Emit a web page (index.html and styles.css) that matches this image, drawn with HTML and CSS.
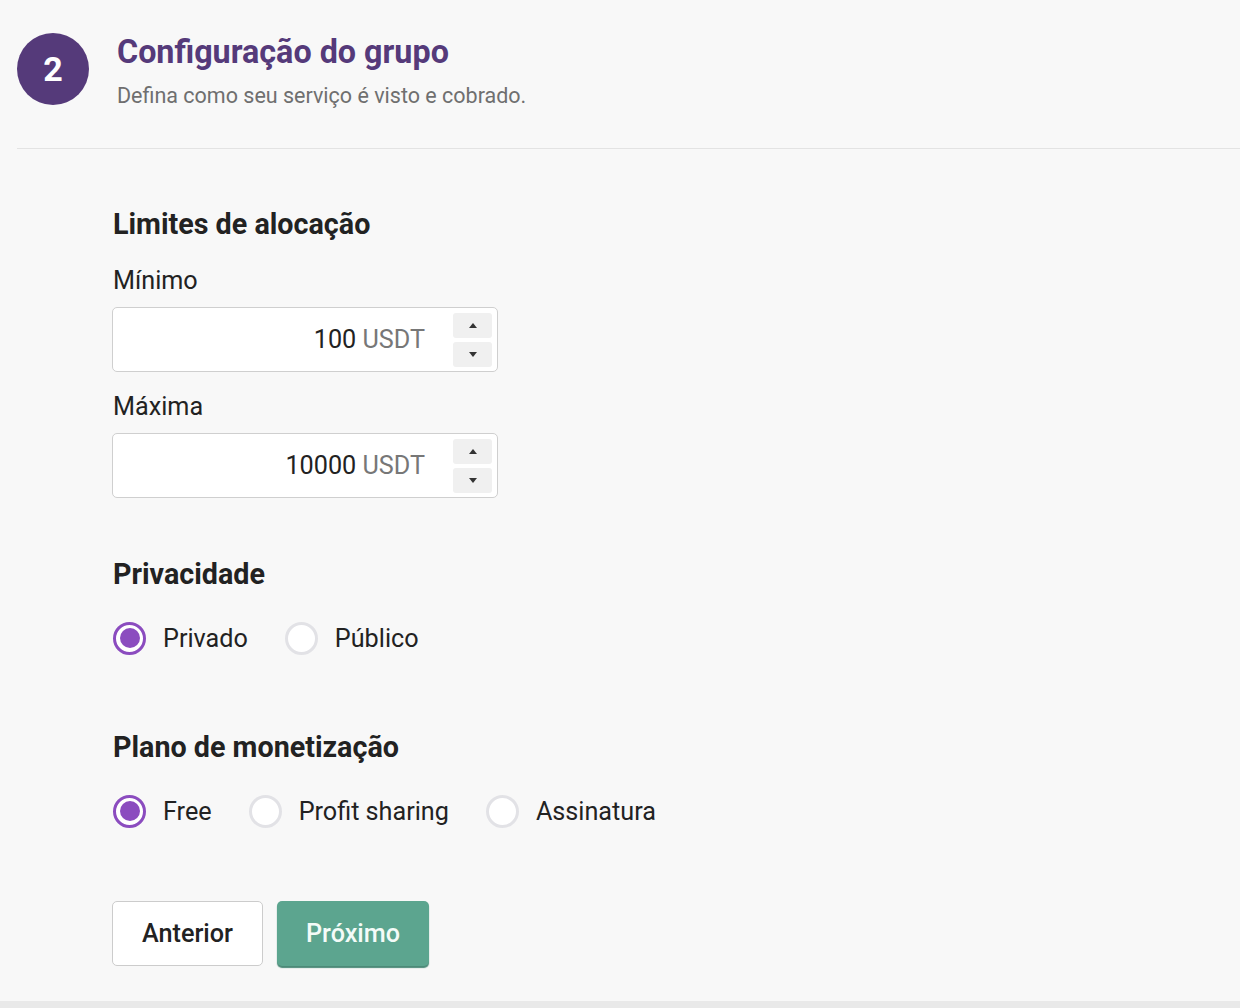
FILE: index.html
```html
<!DOCTYPE html>
<html lang="pt">
<head>
<meta charset="utf-8">
<title>Configuração do grupo</title>
<link rel="stylesheet" href="styles.css">
</head>
<body>
<div class="card">
  <header class="step-header">
    <div class="step-num">2</div>
    <div class="step-text">
      <h1 class="step-title">Configuração do grupo</h1>
      <p class="step-sub">Defina como seu serviço é visto e cobrado.</p>
    </div>
  </header>
  <div class="content">
    <section class="section alloc">
      <h2 class="section-title">Limites de alocação</h2>
      <label class="field-label first">Mínimo</label>
      <div class="num-input">
        <span class="num-value">100 <span class="unit">USDT</span></span>
        <div class="spin">
          <span class="spin-btn"><span class="tri up"></span></span>
          <span class="spin-btn"><span class="tri down"></span></span>
        </div>
      </div>
      <label class="field-label second">Máxima</label>
      <div class="num-input">
        <span class="num-value">10000 <span class="unit">USDT</span></span>
        <div class="spin">
          <span class="spin-btn"><span class="tri up"></span></span>
          <span class="spin-btn"><span class="tri down"></span></span>
        </div>
      </div>
    </section>
    <section class="section privacy">
      <h2 class="section-title">Privacidade</h2>
      <div class="radio-row">
        <span class="radio checked"><span class="dot"></span>Privado</span>
        <span class="radio"><span class="dot"></span>Público</span>
      </div>
    </section>
    <section class="section plan">
      <h2 class="section-title">Plano de monetização</h2>
      <div class="radio-row">
        <span class="radio checked"><span class="dot"></span>Free</span>
        <span class="radio"><span class="dot"></span>Profit sharing</span>
        <span class="radio"><span class="dot"></span>Assinatura</span>
      </div>
    </section>
    <div class="actions">
      <button class="btn btn-outline">Anterior</button>
      <button class="btn btn-primary">Próximo</button>
    </div>
  </div>
</div>
</body>
</html>
```
FILE: styles.css
```css
* { box-sizing: border-box; }
html, body {
  margin: 0;
  padding: 0;
  background: #e9e9e9;
  font-family: Roboto, "Liberation Sans", Arial, sans-serif;
  color: #222222;
}
.card {
  background: #f8f8f8;
  height: 1001px;
  box-shadow: 0 1px 4px rgba(0,0,0,0.18);
  overflow: hidden;
}
.step-header {
  display: flex;
  align-items: flex-start;
  margin-left: 17px;
  padding-top: 33px;
  height: 149px;
  border-bottom: 1px solid #e3e3e3;
}
.step-num {
  width: 72px;
  height: 72px;
  border-radius: 50%;
  background: #553a7a;
  color: #ffffff;
  font-size: 34px;
  font-weight: 700;
  display: flex;
  align-items: center;
  justify-content: center;
  flex-shrink: 0;
}
.step-text {
  margin-left: 28px;
}
.step-title {
  margin: 0;
  font-size: 32.3px;
  font-weight: 700;
  color: #553a7a;
  line-height: 38px;
}
.step-sub {
  margin: 12px 0 0;
  font-size: 21.5px;
  color: #6f6f6f;
  line-height: 26px;
}
.content {
  padding-left: 113px;
  padding-top: 57px;
}
.section-title {
  margin: 0;
  font-size: 28.7px;
  font-weight: 700;
  color: #222222;
  line-height: 36px;
}
.field-label {
  display: block;
  font-size: 25.2px;
  line-height: 30px;
  color: #222222;
  margin-bottom: 11px;
}
.field-label.first { margin-top: 24px; }
.field-label.second { margin-top: 20px; }
.num-input {
  width: 386px;
  height: 65px;
  margin-left: -1px;
  border: 1px solid #cfcfcf;
  border-radius: 5px;
  background: #ffffff;
  display: flex;
  align-items: center;
  justify-content: flex-end;
  padding-right: 5px;
}
.num-value {
  font-size: 25.2px;
  color: #222222;
  margin-right: 28px;
}
.unit { color: #777777; }
.spin {
  display: flex;
  flex-direction: column;
  gap: 4px;
}
.spin-btn {
  width: 39px;
  height: 25px;
  background: #f0f0f0;
  border-radius: 3px;
  display: flex;
  align-items: center;
  justify-content: center;
}
.tri {
  width: 0;
  height: 0;
  border-left: 4px solid transparent;
  border-right: 4px solid transparent;
}
.tri.up { border-bottom: 5px solid #333333; }
.tri.down { border-top: 5px solid #333333; }
.privacy { margin-top: 58px; }
.plan { margin-top: 71px; }
.radio-row {
  display: flex;
  align-items: center;
  margin-top: 26px;
  height: 40px;
}
.radio {
  display: flex;
  align-items: center;
  font-size: 25.2px;
  color: #222222;
  margin-right: 37px;
}
.radio .dot {
  width: 33px;
  height: 33px;
  border-radius: 50%;
  border: 3px solid #e2e2e6;
  background: #ffffff;
  margin-right: 17px;
  position: relative;
  flex-shrink: 0;
}
.radio.checked .dot {
  border-color: #8b4cbf;
}
.radio.checked .dot::after {
  content: "";
  position: absolute;
  left: 3.5px;
  top: 3.5px;
  width: 20px;
  height: 20px;
  border-radius: 50%;
  background: #8b4cbf;
}
.actions {
  display: flex;
  gap: 14px;
  margin-top: 70px;
}
.btn {
  height: 65px;
  border-radius: 5px;
  font-family: Roboto, "Liberation Sans", Arial, sans-serif;
  font-size: 25.2px;
  font-weight: 500;
  cursor: pointer;
}
.btn-outline {
  width: 151px;
  margin-left: -1px;
  background: #ffffff;
  border: 1px solid #cccccc;
  color: #222222;
}
.btn-primary {
  width: 152px;
  background: #5ca58f;
  border: none;
  color: #f4fbf8;
  box-shadow: 0 2px 1px #4c8a78;
}
```
